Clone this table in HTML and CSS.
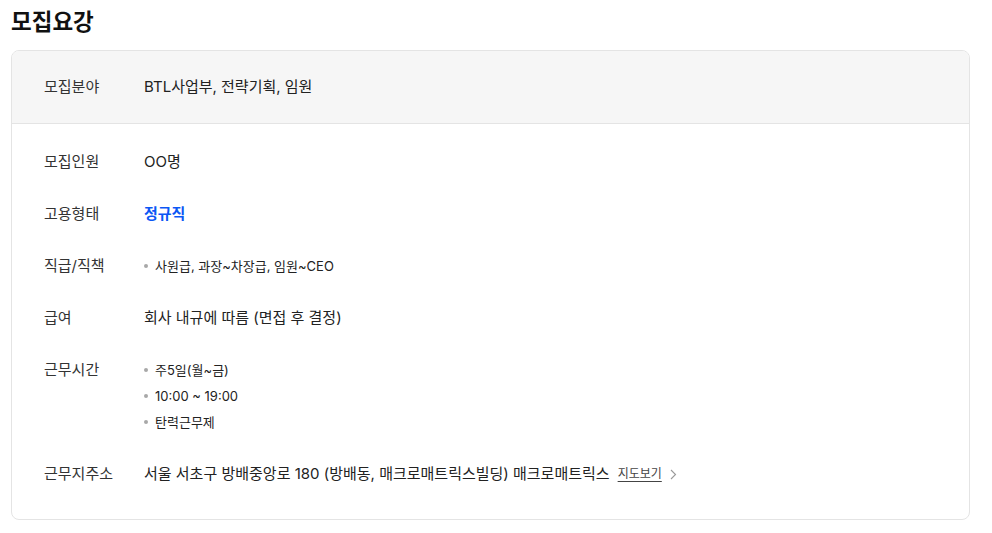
FILE: index.html
```html
<!DOCTYPE html>
<html lang="ko">
<head>
<meta charset="utf-8">
<link rel="stylesheet" href="styles.css">
</head>
<body>
<section class="page">
  <h2 class="title">모집요강</h2>
  <div class="card">
    <div class="card-head">
      <dl class="row">
        <dt class="label">모집분야</dt>
        <dd class="value">BTL사업부, 전략기획, 임원</dd>
      </dl>
    </div>
    <div class="card-body">
      <dl class="row">
        <dt class="label">모집인원</dt>
        <dd class="value">OO명</dd>
      </dl>
      <dl class="row">
        <dt class="label">고용형태</dt>
        <dd class="value strong">정규직</dd>
      </dl>
      <dl class="row">
        <dt class="label">직급/직책</dt>
        <dd class="value">
          <ul class="bullets"><li>사원급, 과장~차장급, 임원~CEO</li></ul>
        </dd>
      </dl>
      <dl class="row">
        <dt class="label">급여</dt>
        <dd class="value">회사 내규에 따름 (면접 후 결정)</dd>
      </dl>
      <dl class="row">
        <dt class="label">근무시간</dt>
        <dd class="value">
          <ul class="bullets">
            <li>주5일(월~금)</li>
            <li>10:00 ~ 19:00</li>
            <li>탄력근무제</li>
          </ul>
        </dd>
      </dl>
      <dl class="row">
        <dt class="label">근무지주소</dt>
        <dd class="value addr">서울 서초구 방배중앙로 180 (방배동, 매크로매트릭스빌딩) 매크로매트릭스 <a class="map" href="#">지도보기</a><svg class="chev" width="7" height="11" viewBox="0 0 7 11"><path d="M1 1l4.5 4.5L1 10" fill="none" stroke="#9a9a9a" stroke-width="1.1"/></svg></dd>
      </dl>
    </div>
  </div>
</section>
</body>
</html>
```
FILE: styles.css
```css
* { box-sizing: border-box; }
body {
  margin: 0;
  background: #fff;
  font-family: "Inter", "Noto Sans CJK KR", sans-serif;
  color: #222;
}
.page {
  padding: 6px 22px 0 11px;
}
.title {
  margin: 0 0 12px;
  font-size: 22.5px;
  line-height: 32px;
  font-weight: 700;
  color: #111;
}
.card {
  border: 1px solid #e4e4e4;
  border-radius: 8px;
  overflow: hidden;
}
.card-head {
  background: #f6f6f6;
  border-bottom: 1px solid #e4e4e4;
  padding: 25px 32px 25px;
}
.card-body {
  padding: 27px 32px 34px;
  display: flex;
  flex-direction: column;
  gap: 30px;
}
.row {
  display: flex;
  margin: 0;
  font-size: 15px;
  line-height: 22px;
}
.label {
  width: 100px;
  flex: none;
  color: #333;
}
.value {
  margin: 0;
  color: #222;
  display: flex;
  align-items: center;
}
.strong {
  color: #0b57f5;
  font-weight: 700;
}
.bullets {
  list-style: none;
  margin: 0;
  padding: 0;
  display: flex;
  flex-direction: column;
  gap: 4px;
  font-size: 13px;
}
.bullets li {
  position: relative;
  padding-left: 11px;
  line-height: 22px;
}
.bullets li::before {
  content: "";
  position: absolute;
  left: 0;
  top: 9px;
  width: 4px;
  height: 4px;
  border-radius: 50%;
  background: #a8a8a8;
}
.map {
  margin-left: 8px;
  font-size: 12px;
  color: #444;
  text-decoration: underline;
  text-underline-offset: 3px;
}
.chev {
  margin-left: 8px;
}
```
